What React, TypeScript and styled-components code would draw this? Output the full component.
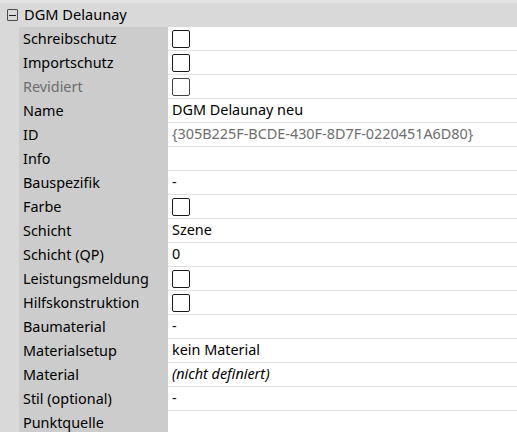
import React from "react";
import styled, { createGlobalStyle } from "styled-components";

const Global = createGlobalStyle`
  html, body { margin: 0; padding: 0; background: #ffffff; }
  body { font-family: "Noto Sans", "Open Sans", sans-serif; font-size: 14.4px; color: #000; }
`;

const Panel = styled.div`
  width: 517px;
  height: 432px;
  overflow: hidden;
  background: #ffffff;
  display: flex;
  flex-direction: column;
`;

const TopStrip = styled.div`
  height: 3px;
  background: #e4e4e4;
  flex: none;
`;

const Header = styled.div`
  height: 24px;
  flex: none;
  background: #d9d9d9;
  display: flex;
  align-items: center;
  padding-left: 7px;
  gap: 6px;
`;

const ToggleBox = styled.div`
  width: 9px;
  height: 10px;
  border: 1px solid #4a4a4a;
  border-radius: 1px;
  display: flex;
  align-items: center;
  justify-content: center;
  &::after {
    content: "";
    width: 7px;
    height: 1px;
    background: #1e1e1e;
  }
`;

const HeaderTitle = styled.span`
  font-size: 14.6px;
  color: #000;
  padding-bottom: 2px;
`;

const Row = styled.div`
  display: grid;
  grid-template-columns: 19px 149px 1fr;
  height: 24px;
  flex: none;
`;

const Gutter = styled.div`
  background: #d9d9d9;
`;

const Label = styled.div<{ $disabled?: boolean }>`
  background: #cccccc;
  display: flex;
  align-items: center;
  padding-left: 4px;
  padding-bottom: 2px;
  color: ${(p) => (p.$disabled ? "#6d6d6d" : "#000")};
  white-space: nowrap;
`;

const Value = styled.div<{ $muted?: boolean; $italic?: boolean; $check?: boolean }>`
  background: #ffffff;
  border-bottom: 1px solid #e0e0e0;
  display: flex;
  align-items: center;
  padding-left: 4px;
  padding-bottom: ${(p) => (p.$check ? "0" : "2px")};
  color: ${(p) => (p.$muted ? "#6d6d6d" : "#000")};
  font-style: ${(p) => (p.$italic ? "italic" : "normal")};
  white-space: nowrap;
`;

const Check = styled.span<{ $disabled?: boolean }>`
  display: block;
  width: 16px;
  height: 16px;
  border: 1px solid ${(p) => (p.$disabled ? "#444444" : "#1a1a1a")};
  border-radius: 2px;
  background: #fff;
`;

type Item = {
  label: string;
  value?: string;
  check?: boolean;
  disabled?: boolean;
  muted?: boolean;
  italic?: boolean;
};

const items: Item[] = [
  { label: "Schreibschutz", check: true },
  { label: "Importschutz", check: true },
  { label: "Revidiert", check: true, disabled: true },
  { label: "Name", value: "DGM Delaunay neu" },
  { label: "ID", value: "{305B225F-BCDE-430F-8D7F-0220451A6D80}", muted: true },
  { label: "Info", value: "" },
  { label: "Bauspezifik", value: "-" },
  { label: "Farbe", check: true },
  { label: "Schicht", value: "Szene" },
  { label: "Schicht (QP)", value: "0" },
  { label: "Leistungsmeldung", check: true },
  { label: "Hilfskonstruktion", check: true },
  { label: "Baumaterial", value: "-" },
  { label: "Materialsetup", value: "kein Material" },
  { label: "Material", value: "(nicht definiert)", italic: true },
  { label: "Stil (optional)", value: "-" },
  { label: "Punktquelle", value: "" },
];

export default function App() {
  return (
    <>
      <Global />
      <Panel>
        <TopStrip />
        <Header>
          <ToggleBox />
          <HeaderTitle>DGM Delaunay</HeaderTitle>
        </Header>
        {items.map((it) => (
          <Row key={it.label}>
            <Gutter />
            <Label $disabled={it.disabled}>{it.label}</Label>
            <Value $muted={it.muted} $italic={it.italic} $check={it.check}>
              {it.check ? <Check $disabled={it.disabled} /> : it.value}
            </Value>
          </Row>
        ))}
      </Panel>
    </>
  );
}
